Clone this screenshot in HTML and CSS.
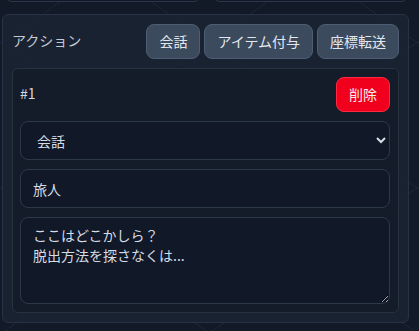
FILE: index.html
```html
<!DOCTYPE html>
<html lang="ja">
<head>
    <meta charset="UTF-8">
    <meta name="viewport" content="width=device-width, initial-scale=1.0">
    <title>アクション編集</title>
    <link rel="stylesheet" href="styles.css">
</head>
<body>
    <div class="prev-row">
        <div class="prev-field"></div>
        <div class="prev-field"></div>
    </div>

    <div class="panel">
        <div class="panel-header">
            <span class="panel-title">アクション</span>
            <div class="btn-group">
                <button class="btn">会話</button>
                <button class="btn">アイテム付与</button>
                <button class="btn">座標転送</button>
            </div>
        </div>

        <div class="action-card">
            <div class="card-header">
                <span class="card-index">#1</span>
                <button class="btn-danger">削除</button>
            </div>
            <select class="field">
                <option selected>会話</option>
                <option>アイテム付与</option>
                <option>座標転送</option>
            </select>
            <input class="field" type="text" value="旅人">
            <textarea class="field field-text">ここはどこかしら？
脱出方法を探さなくは...</textarea>
        </div>
    </div>
</body>
</html>
```

FILE: styles.css
```css
* {
    box-sizing: border-box;
    margin: 0;
    padding: 0;
    font-family: "Noto Sans CJK JP", "Noto Sans", sans-serif;
}

html {
    color-scheme: dark;
}

body {
    background-color: #131a27;
    background-image:
        repeating-linear-gradient(35deg, transparent 0 118px, rgba(60, 75, 100, 0.18) 118px 119px),
        repeating-linear-gradient(-35deg, transparent 0 118px, rgba(60, 75, 100, 0.18) 118px 119px);
    width: 419px;
    height: 331px;
    overflow: hidden;
}

.prev-row {
    display: flex;
    gap: 14px;
    padding: 0 12px 0 6px;
    margin-top: -38px;
}

.prev-field {
    flex: 1;
    height: 40px;
    border: 1px solid #2b3748;
    border-radius: 6px;
    background-color: #111827;
}

.panel {
    margin: 12px 0 0 2px;
    width: 407px;
    background-color: rgba(28, 37, 52, 0.75);
    border: 1px solid #273244;
    border-radius: 6px;
    padding: 9px;
}

.panel-header {
    display: flex;
    align-items: center;
    justify-content: space-between;
    margin-bottom: 9px;
}

.panel-title {
    color: #c3cad4;
    font-size: 14px;
    line-height: 1;
    padding-bottom: 3px;
}

.btn-group {
    display: flex;
    gap: 4px;
}

.btn {
    height: 35px;
    padding: 0 12px 2px;
    background-color: #3c4a5e;
    color: #e3e8ef;
    border: 1px solid #4e5d73;
    border-radius: 8px;
    font-size: 14px;
    line-height: 1;
    cursor: pointer;
}

.action-card {
    display: flex;
    flex-direction: column;
    gap: 9px;
    background-color: #141b29;
    border: 1px solid #27323f;
    border-radius: 6px;
    padding: 8px 8px 8px 7px;
}

.card-header {
    display: flex;
    align-items: center;
    justify-content: space-between;
}

.card-index {
    color: #d3d9e1;
    font-size: 14px;
    line-height: 1;
    padding-bottom: 3px;
}

.btn-danger {
    width: 54px;
    height: 35px;
    padding-bottom: 2px;
    background-color: #f0001c;
    color: #fde8ea;
    border: 1px solid #ff2a40;
    border-radius: 8px;
    font-size: 14px;
    line-height: 1;
    cursor: pointer;
}

.field {
    width: 100%;
    height: 39px;
    background-color: #111827;
    color: #d6dce4;
    border: 1px solid #2c3949;
    border-radius: 8px;
    padding: 0 12px;
    font-size: 14px;
    outline: none;
}

.field-text {
    height: 87px;
    padding: 7px 12px 8px;
    line-height: 20px;
    resize: vertical;
}
```
